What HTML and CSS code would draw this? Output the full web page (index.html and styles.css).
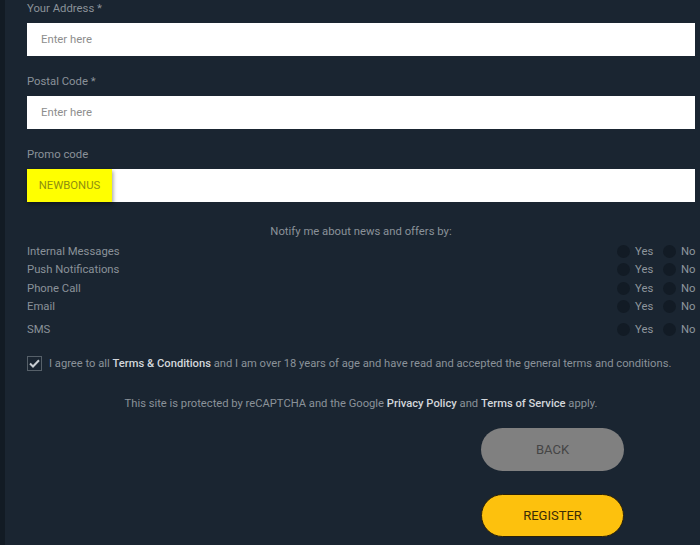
FILE: index.html
```html
<!DOCTYPE html>
<html lang="en">
<head>
    <meta charset="UTF-8">
    <meta name="viewport" content="width=device-width, initial-scale=1.0">
    <title>Register</title>
    <link rel="stylesheet" href="styles.css">
</head>
<body>

    <div class="register-form">
        <!-- address fields -->
        <div class="field">
            <label class="field-label">Your Address *</label>
            <div class="field-input"><span class="placeholder">Enter here</span></div>
        </div>
        <div class="field">
            <label class="field-label">Postal Code *</label>
            <div class="field-input"><span class="placeholder">Enter here</span></div>
        </div>
        <div class="field">
            <label class="field-label">Promo code</label>
            <div class="field-input"><span class="promo-value">NEWBONUS</span></div>
        </div>

        <!-- notification preferences -->
        <div class="notify-title">Notify me about news and offers by:</div>
        <div class="notify-list">
            <div class="notify-row">
                <span class="notify-name">Internal Messages</span>
                <span class="radio"></span><span class="radio-label">Yes</span>
                <span class="radio"></span><span class="radio-label">No</span>
            </div>
            <div class="notify-row">
                <span class="notify-name">Push Notifications</span>
                <span class="radio"></span><span class="radio-label">Yes</span>
                <span class="radio"></span><span class="radio-label">No</span>
            </div>
            <div class="notify-row">
                <span class="notify-name">Phone Call</span>
                <span class="radio"></span><span class="radio-label">Yes</span>
                <span class="radio"></span><span class="radio-label">No</span>
            </div>
            <div class="notify-row">
                <span class="notify-name">Email</span>
                <span class="radio"></span><span class="radio-label">Yes</span>
                <span class="radio"></span><span class="radio-label">No</span>
            </div>
            <div class="notify-row sms">
                <span class="notify-name">SMS</span>
                <span class="radio"></span><span class="radio-label">Yes</span>
                <span class="radio"></span><span class="radio-label">No</span>
            </div>
        </div>

        <div class="agree-row">
            <span class="checkbox">
                <svg width="11" height="9" viewBox="0 0 11 9"><path d="M1 4.5 L4 7.5 L10 1.2" fill="none" stroke="#c8cdd2" stroke-width="2"/></svg>
            </span>
            <span>I agree to all <b>Terms &amp; Conditions</b> and I am over 18 years of age and have read and accepted the general terms and conditions.</span>
        </div>

        <div class="captcha-note">
            This site is protected by reCAPTCHA and the Google <b>Privacy Policy</b> and <b>Terms of Service</b> apply.
        </div>

        <div class="buttons">
            <button class="btn btn-back">BACK</button>
            <button class="btn btn-register">REGISTER</button>
        </div>
    </div>

</body>
</html>
```

FILE: styles.css
```css
body {
    margin: 0;
    padding: 0;
    font-family: Roboto, "Liberation Sans", sans-serif;
    font-size: 11.3px;
    color: #8a9299;
    background-color: #1a2531;
}

.register-form {
    border-left: 5px solid #121b24;
    padding: 0 5px 0 22px;
    height: 545px;
    box-sizing: border-box;
}

.field {
    margin-bottom: 17px;
}

.field-label {
    display: block;
    line-height: 16px;
    padding-top: 1px;
    margin-bottom: 6px;
}

.field-input {
    height: 33px;
    background-color: #ffffff;
    display: flex;
    align-items: center;
}

.placeholder {
    padding-left: 14px;
    color: #8d8d8d;
}

.promo-value {
    background-color: #ffff00;
    color: #8f8f10;
    height: 100%;
    width: 85px;
    display: flex;
    align-items: center;
    justify-content: center;
    box-shadow: 1px 2px 4px rgba(0, 0, 0, 0.4);
}

.notify-title {
    text-align: center;
    line-height: 16px;
    margin-top: 22px;
    margin-bottom: 2px;
}

.notify-row {
    display: flex;
    align-items: center;
    height: 18.5px;
}

.notify-row.sms {
    margin-top: 4px;
}

.notify-name {
    flex: 1;
}

.radio {
    width: 13px;
    height: 13px;
    border-radius: 50%;
    background-color: #121b25;
}

.radio-label {
    margin-left: 5px;
    width: 28px;
    color: #8e969d;
}

.radio-label:last-child {
    width: 14px;
}

.agree-row {
    display: flex;
    align-items: center;
    gap: 7px;
    margin-top: 17px;
    font-size: 11.2px;
}

.checkbox {
    width: 13px;
    height: 13px;
    border: 1px solid #566069;
    display: flex;
    align-items: center;
    justify-content: center;
}

b {
    color: #d3d7db;
    font-weight: 500;
}

.captcha-note {
    text-align: center;
    margin-top: 26px;
    font-size: 11.2px;
}

.buttons {
    display: flex;
    flex-direction: column;
    align-items: flex-end;
    gap: 23px;
    margin-top: 18px;
    padding-right: 71px;
}

.btn {
    width: 143px;
    height: 43px;
    border-radius: 22px;
    font-family: Roboto, "Liberation Sans", sans-serif;
    font-size: 13px;
    cursor: pointer;
}

.btn-back {
    background-color: #808080;
    color: #454545;
    border: none;
}

.btn-register {
    background-color: #fdc10d;
    color: #3b2c05;
    border: 1px solid #2b2107;
}
```
